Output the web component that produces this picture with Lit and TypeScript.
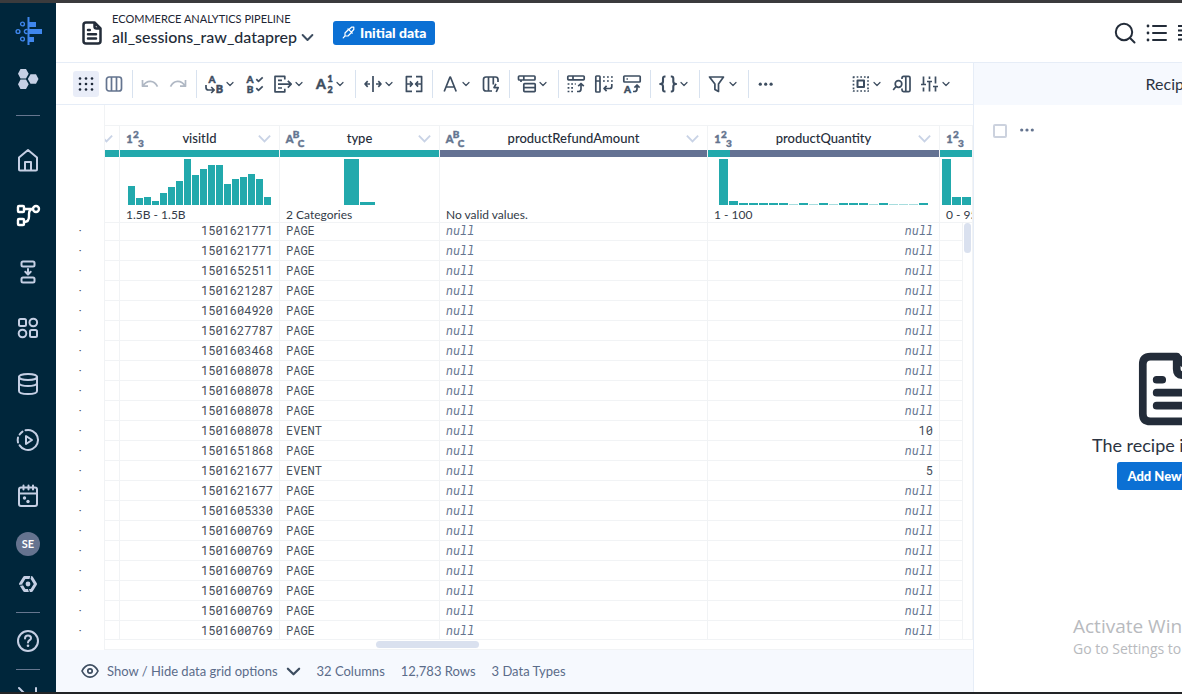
import { LitElement, html, svg, css } from "lit";
import { customElement } from "lit/decorators.js";

const TOOL: Record<string, unknown> = {
  grid: svg`<g fill="#1f2a3a" stroke="none">${[4.5, 10, 15.5].map((y) => [4, 10, 16].map((x) => svg`<circle cx=${x} cy=${y} r="1.3"/>`))}</g>`,
  columns: svg`<rect x="2.5" y="3" width="15" height="14" rx="2.5"/><path d="M7.5 3v14M12.5 3v14"/>`,
  undo: svg`<path d="M2.5 6v6.2h5.5M3 11.7C7 5.8 14 5.8 17.5 12.7"/>`,
  redo: svg`<path d="M17.5 6v6.2H12M17 11.7C13 5.8 6 5.8 2.5 12.7"/>`,
  replace: svg`<text x="8" y="8.5" font-size="10">A</text><text x="15.5" y="19" font-size="11">B</text><path d="M2 11v2.5q0 2.5 2.5 2.5H10M7.2 13l3 3-3 3"/>`,
  standard: svg`<text x="5" y="8.5" font-size="10">A</text><text x="5" y="18.5" font-size="10">B</text><path d="M11.3 5.2l2.2 2.2 4.2-4M11.3 14.2l2.2 2.2 4.2-4"/>`,
  exporting: svg`<path d="M11.8 5.5V2.4H2v15.4h9.800v-3M5 6.300h4M5 14h4M5 10.200h13M14.800 6.800l3.400 3.400-3.400 3.400"/>`,
  number: svg`<text x="7" y="15" font-size="14">A</text><text x="16" y="8" font-size="9">1</text><text x="16" y="19" font-size="9">2</text>`,
  split: svg`<path d="M10 2v16M7 10H2.2M4.7 7.2L2 10l2.7 2.8M13 10h4.8M15.3 7.2L18 10l-2.7 2.8"/>`,
  merge: svg`<path d="M8 2.6H2.4v14.8H8M12 2.6h5.6v14.8H12M2.5 10H8M5.9 7.4L8.4 10l-2.5 2.6M17.5 10H12M14.1 7.4L11.6 10l2.5 2.6"/>`,
  letter: svg`<path d="M4.2 17.5L10 3h.4l5.8 14.5M6.2 13h8"/>`,
  bolt: svg`<path d="M11 17H5q-2.5 0-2.5-2.5v-9Q2.5 3 5 3h9.5Q17 3 17 5.5V8M7.5 3v14M12.3 3v7.5M15 9.8l-2 3.8h4.2L15.2 18"/>`,
  tables: svg`<rect x="1.5" y="2" width="16.5" height="4" rx=".8"/><path d="M6.8 2v4M4 6v2"/><rect x="6.8" y="9.6" width="11.4" height="8" rx=".8"/><path d="M6.8 13.6h11.4"/>`,
  pivot: svg`<rect x="1.8" y="2" width="16.4" height="3.8" rx=".8"/><path d="M7 2v4M11 17.5h1.5q2.5 0 2.5-2.5v-5M12.2 12.2L15 9.5l2.8 2.7"/><path d="M1.600 10h1.800M5.200 10H7M8.800 10h1M1.600 13.800h1.800M5.200 13.800H7M1.600 17.500h1.800M5.200 17.500H7"/>`,
  unpivot: svg`<rect x="1.800" y="2" width="4.200" height="16" rx=".8"/><path d="M2 7h4M17.800 10v2.500q0 2-2 2H10M12.600 11.800L10 14.500l2.600 2.700"/><path d="M9 3h1.800M13 3h1.800M17 3h1.800M9 7h1.800M13 7h1.800M17 7h1.800"/>`,
  header: svg`<rect x="1.800" y="2" width="16.400" height="6" rx=".8"/><path d="M4.500 5h1.400M11 17.500h1.500q2.500 0 2.500-2.500v-3.200M12.400 13.600L15 11l2.600 2.600"/><text x="5.500" y="18.500" font-size="10">A</text>`,
  braces: svg`<path stroke-width="2.100" d="M7.500 2.500H6.800Q5 2.500 5 4.500v3Q5 10 2.200 10 5 10 5 12.500v3q0 2 1.800 2h.7M12.800 2.500h.7q1.800 0 1.800 2v3q0 2.500 2.800 2.500-2.800 0-2.800 2.500v3q0 2-1.800 2h-.7"/>`,
  filter: svg`<path d="M2.500 3h14l-5 7v7.500l-3.600-2V10z"/>`,
  more: svg`<g fill="#3d4d60" stroke="none"><circle cx="4.300" cy="10.200" r="1.600"/><circle cx="9.700" cy="10.200" r="1.600"/><circle cx="15.100" cy="10.200" r="1.600"/></g>`,
  select: svg`<rect x="6.500" y="6.500" width="6.500" height="6.500" stroke-width="2"/><path stroke-dasharray="1.700 1.950" d="M2 3h16M2 17h16M2.500 2.500v15M17 2.500v15"/>`,
  find: svg`<circle cx="6.500" cy="10" r="3.300"/><path d="M4 12.500L1.200 16M10 5V4q0-1.600 1.600-1.600h5q1.400 0 1.400 1.400v12.400q0 1.400-1.400 1.400h-5Q10 17.600 10 16v-1.500M13.800 2.600v14.800"/>`,
  sliders: svg`<path d="M3.500 2.500v7.500M1 10.500h5M3.500 13.500v4M9.500 2.500v2.500M7 7.500h5M9.500 8v9.500M15.500 2.500v7M13 12.500h5M15.500 13v4.500"/>`,
};

const chev = (w = 8) => html`<svg class="chev" width=${w} height=${w} viewBox="0 0 8 8"><path d="M1 2.5l3 3 3-3"/></svg>`;

const doc = (w: number, h: number) => html`<svg width=${w} height=${h} viewBox="0 0 20 24" fill="none" stroke="#232c39" stroke-width="2.5" stroke-linecap="round" stroke-linejoin="round"><path d="M12.5 1.500H4Q1.500 1.500 1.500 4v16q0 2.500 2.500 2.500h12q2.500 0 2.500-2.500V7.500zM12.500 1.500v4q0 2 2 2h4M6 9h1.800M6 13.200h8M6 17.400h8"/></svg>`;

const SIDE: Record<string, unknown> = {
  logo: svg`<g stroke="none" fill="#3f86ec"><rect x="13.500" y="0" width="2" height="28"/><rect x="15" y="5" width="7" height="5"/><rect x="15" y="12" width="13" height="5"/><rect x="15" y="20" width="5" height="5"/></g><g stroke="#3f86ec" stroke-width="1.400"><circle cx="8.500" cy="7" r="1.900"/><circle cx="4" cy="14.500" r="1.900"/><path d="M13 12.600a2 2 0 1 0 0 3.800"/><circle cx="8.500" cy="22" r="1.900"/></g>`,
  hexes: svg`<g stroke="none" fill="#c5cfe4"><path d="M6.500 4h5.500l2.700 4.700-2.700 4.700H6.500L4 8.700zM6.500 14.600h5.500l2.700 4.700L12 24H6.500L4 19.300zM16.500 9.300H22l2.500 4.700-2.500 4.700h-5.500L13.800 14z"/></g>`,
  home: svg`<path d="M5 23.500V11.500l9-7.500 9 7.500v12q0 1-1 1h-5v-8.500h-6v8.500H6q-1 0-1-1z M11 24.500h6"/>`,
  flow: svg`<g stroke-width="2.400"><rect x="4" y="4" width="6" height="6" rx="1"/><circle cx="22" cy="7" r="3"/><rect x="4" y="17" width="6" height="6" rx="1"/><path d="M10 7h9M10 20q5 0 5-5.500V12q0-5 4-5"/></g>`,
  deploy: svg`<rect x="7.500" y="3.500" width="13" height="5" rx="1.500"/><rect x="7.500" y="19.500" width="13" height="5" rx="1.500"/><path d="M14 11v5M11.300 13.800L14 16.500l2.700-2.700"/>`,
  apps: svg`<rect x="5" y="5" width="7" height="7" rx="1.500"/><circle cx="19.300" cy="8.500" r="3.800"/><circle cx="8.500" cy="19.500" r="3.800"/><rect x="16" y="16" width="7" height="7" rx="1.500"/>`,
  data: svg`<ellipse cx="14" cy="7" rx="9" ry="3"/><path d="M5 7v14q0 3 9 3t9-3V7M5 13.500q1.500 2.500 9 2.500t9-2.500"/>`,
  play: svg`<path d="M11.500 4.300A10 10 0 1 1 5.600 19.400M4 16.500a10 10 0 0 1 0-5M5.600 8.500A10 10 0 0 1 8.500 5.600M12 10v8l6-4z"/>`,
  calendar: svg`<rect x="5" y="5.500" width="18" height="18.500" rx="2"/><path d="M5 11.500h18M9.500 3.500v4M14.500 3.500v4M19 3.500v4"/><g stroke="none" fill="#c5cfe4"><circle cx="10.500" cy="16" r="1.700"/><circle cx="14" cy="19.500" r="1.700"/></g>`,
  settings: svg`<path stroke-width="3" d="M10.500 7.500h7l4 6.500-4 6.500h-7L6.500 14z"/><circle cx="14" cy="14" r="2.400" fill="#c5cfe4" stroke="none"/><path stroke="#00263b" stroke-width="1" d="M17 5l-1 4M4.500 15.500l4-.5M15.500 22.500l-1-3.500"/>`,
  help: svg`<circle cx="14" cy="14" r="10"/><path d="M11 11.500q0-3 3-3t3 2.700c0 2-3 2-3 4.300"/><circle cx="14" cy="18.800" r="1.300" fill="#c5cfe4" stroke="none"/>`,
  expand: svg`<path d="M5 4l5 5M9 4M22 4v5h-4.500M5 24l5-5M22 24v-5"/>`,
};

const side = (name: string, label: string, cls = "") => html`<a class="item ${cls}" href="#" aria-label=${label}><svg width="28" height="28" viewBox="0 0 28 28">${SIDE[name]}</svg></a>`;

const tool = (name: string, label: string, menu = false, cls = "") => html`<button class="tool ${menu ? "menu" : ""} ${cls}" aria-label=${label}><svg width="20" height="20" viewBox="0 0 20 20">${TOOL[name]}</svg>${menu ? chev() : ""}</button>`;
const sep = html`<span class="sep"></span>`;

const typeIcon = (kind: string) => {
  const t = kind === "num" ? ["1", "2", "3"] : ["A", "B", "C"];
  return html`<svg class="kind" width="20" height="20" viewBox="0 0 20 20" aria-hidden="true"><text x="4.5" y="15" font-size="11">${t[0]}</text><text x="11" y="10" font-size="10">${t[1]}</text><text x="16" y="19" font-size="10">${t[2]}</text></svg>`;
};

interface Column { name: string; kind: string; bars: number[]; layout: string; summary: string; fill: number; span?: number }
const COLUMNS: Column[] = [
  { name: "visitId", kind: "num", bars: [19, 7, 8, 4, 12, 18, 24, 46, 30, 36, 40, 40, 21, 26, 28, 31, 26, 8], layout: "dense", summary: "1.5B - 1.5B", fill: 100 },
  { name: "type", kind: "text", bars: [46, 3], layout: "wide", summary: "2 Categories", fill: 100 },
  { name: "productRefundAmount", kind: "text", bars: [], layout: "dense", summary: "No valid values.", fill: 0 },
  { name: "productQuantity", kind: "num", bars: [46, 4, 2, 2, 2, 2, 2, 1, 2, 1, 2, 1, 2, 2, 2, 1, 2, 1, 1, 1, 2], layout: "medium", summary: "1 - 100", fill: 9.5 },
  { name: "", kind: "num", bars: [46, 8, 8], layout: "edge", summary: "0 - 955", fill: 100, span: 2 },
];

const ROWS: [string, string, string][] = [
  ["1501621771", "PAGE", ""], ["1501621771", "PAGE", ""], ["1501652511", "PAGE", ""], ["1501621287", "PAGE", ""],
  ["1501604920", "PAGE", ""], ["1501627787", "PAGE", ""], ["1501603468", "PAGE", ""], ["1501608078", "PAGE", ""],
  ["1501608078", "PAGE", ""], ["1501608078", "PAGE", ""], ["1501608078", "EVENT", "10"], ["1501651868", "PAGE", ""],
  ["1501621677", "EVENT", "5"], ["1501621677", "PAGE", ""], ["1501605330", "PAGE", ""], ["1501600769", "PAGE", ""],
  ["1501600769", "PAGE", ""], ["1501600769", "PAGE", ""], ["1501600769", "PAGE", ""], ["1501600769", "PAGE", ""],
  ["1501600769", "PAGE", ""],
];

@customElement("side-nav")
export class SideNav extends LitElement {
  static styles = css`
    :host { display: block; flex: none; width: 56px; background: #00263b; overflow: hidden; }
    nav { display: flex; flex-direction: column; align-items: center; }
    .item { flex: none; width: 56px; height: 56px; display: flex; align-items: center; justify-content: center; text-decoration: none; }
    .short { height: 40px; }
    svg { fill: none; stroke: #c5cfe4; stroke-width: 2; stroke-linejoin: round; stroke-linecap: round; }
    .active svg { stroke: #fff; }
    hr { width: 24px; height: 1px; border: 0; margin: 8px 0; background: #66768f; }
    hr.far { margin: 16px 0; }
    .avatar { width: 24px; height: 24px; border-radius: 50%; background: #65738f; color: #fff; font: bold 11px/24px Lato, sans-serif; text-align: center; }
  `;
  render() {
    return html`<nav>
      ${side("logo", "Dataprep")}${side("hexes", "Products", "short")}
      <hr class="far" />
      ${side("home", "Home")}${side("flow", "Flows", "active")}${side("deploy", "Plans")}${side("apps", "Library")}
      ${side("data", "Data")}${side("play", "Jobs")}${side("calendar", "Schedules")}
      <a class="item short" href="#" aria-label="Account"><span class="avatar">SE</span></a>
      ${side("settings", "Settings", "short")}<hr />${side("help", "Help", "short")}<hr />${side("expand", "Expand menu", "short")}
    </nav>`;
  }
}

@customElement("data-grid")
export class DataGrid extends LitElement {
  static styles = css`
    :host { display: flex; flex-direction: column; flex: 1; min-height: 0; overflow: hidden; }
    table { table-layout: fixed; width: 100%; border-collapse: separate; border-spacing: 0; }
    .c-gutter { width: 49px; } .c-prev { width: 15px; } .c-mid { width: 160px; } .c-qty { width: 232px; } .c-next { width: 23px; } .c-scroll { width: 10px; }
    th, td { padding: 0; border-right: 1px solid #f1f3f5; border-bottom: 1px solid #f1f3f5; overflow: hidden; white-space: nowrap; vertical-align: top; }
    th { font-weight: normal; text-align: left; }
    .lead td { height: 20px; border-right: 0; }
    .gutter, .lead .gutter { border-bottom: 0; border-right: 1px solid #f1f3f5; }
    tbody td { height: 19px; line-height: 19px; font-family: "Roboto Mono", "Liberation Mono", monospace; font-size: 12px; color: #454d59; }
    tbody tr:first-child td { height: 17px; line-height: 14px; }
    tbody tr:last-child td { height: 18px; line-height: 18px; }
    td.gutter { text-align: center; }
    td.num { text-align: right; padding-right: 6px; }
    td.str { padding-left: 6px; }
    tbody td.null { font-style: italic; color: #64748f; }
    .thumb { width: 7px; height: 30px; margin: 0 auto; border-radius: 4px; background: #dae1ef; }
    .head { display: grid; grid-template-columns: 20px 1fr 20px; align-items: center; height: 24px; padding: 0 5px; }
    .head.cut { padding: 0; grid-template-columns: 20px; justify-content: end; }
    .head.last { grid-template-columns: 20px; }
    .name { text-align: center; font-size: 13px; line-height: 20px; font-weight: 500; color: #262d3a; }
    .more { display: flex; justify-content: center; padding: 0; border: 0; background: none; }
    .chev { fill: none; stroke: #c9d3e6; stroke-width: 1; }
    .kind { overflow: visible; fill: #64748f; stroke: #64748f; stroke-width: 0.4; font-family: Lato, sans-serif; font-weight: 900; text-anchor: middle; }
    .quality { height: 7px; background: #647293; }
    .valid { height: 7px; background: #22a9ac; }
    .bars { display: flex; align-items: flex-end; height: 46px; margin-top: 2px; gap: 1px; }
    .bar { flex: none; background: #22a9ac; }
    .faint { opacity: 0.4; }
    .dense { padding-left: 8px; } .dense .bar { width: 7px; }
    .wide { justify-content: center; } .wide .bar { width: 15px; }
    .medium { padding-left: 11px; } .medium .bar { width: 9px; }
    .edge { padding-left: 2px; } .edge .bar { width: 9px; }
    .summary { height: 15px; padding: 2px 0 0 6px; font-size: 12px; line-height: 15px; color: #333b48; }
    .track { flex: none; height: 8px; margin-left: 48px; border-left: 1px solid #f1f3f5; border-bottom: 1px solid #f1f3f5; padding: 1px 0 0 271px; }
    .slide { width: 103px; height: 7px; border-radius: 4px; background: #dae1ef; }
  `;
  private cell(c: Column) {
    return html`<th colspan=${c.span ?? 1} scope="col">
      <div class="head ${c.name ? "" : "last"}">
        ${typeIcon(c.kind)}${c.name ? html`<span class="name">${c.name}</span><button class="more" aria-label="Column menu">${chev(15)}</button>` : ""}
      </div>
      <div class="quality"><div class="valid" style="width:${c.fill}%"></div></div>
      <div class="bars ${c.layout}">${c.bars.map((h) => html`<div class="bar ${h === 1 ? "faint" : ""}" style="height:${h}px"></div>`)}</div>
      <div class="summary">${c.summary}</div>
    </th>`;
  }
  render() {
    return html`<table>
        <colgroup><col class="c-gutter" /><col class="c-prev" /><col class="c-mid" /><col class="c-mid" /><col /><col class="c-qty" /><col class="c-next" /><col class="c-scroll" /></colgroup>
        <thead>
          <tr class="lead"><td class="gutter"></td><td colspan="7"></td></tr>
          <tr><td class="gutter"></td>
            <th><div class="head cut">${chev(15)}</div><div class="quality"><div class="valid"></div></div></th>
            ${COLUMNS.map((c) => this.cell(c))}
          </tr>
        </thead>
        <tbody>
          ${ROWS.map(([id, type, qty], i) => html`<tr>
            <td class="gutter">·</td><td></td><td class="num">${id}</td><td class="str">${type}</td>
            <td class="str null">null</td><td class="num ${qty ? "" : "null"}">${qty || "null"}</td><td></td>
            ${i === 0 ? html`<td class="scroll" rowspan=${ROWS.length}><div class="thumb"></div></td>` : ""}
          </tr>`)}
        </tbody>
      </table>
      <div class="track"><div class="slide"></div></div>`;
  }
}

@customElement("recipe-panel")
export class RecipePanel extends LitElement {
  static styles = css`
    :host { display: block; flex: none; width: 390px; border-left: 1px solid #e6edf7; background: #fff; }
    h2 { margin: 0; height: 42px; background: #f6f9fe; text-align: center; font-size: 16px; line-height: 42px; font-weight: normal; color: #2c3442; }
    .bar { display: flex; align-items: center; gap: 13px; padding: 19px 19px 0; }
    input { appearance: none; width: 14px; height: 14px; margin: 0; border: 2px solid #ccd2de; border-radius: 2px; background: #fff; }
    .more { padding: 0; border: 0; background: none; display: flex; }
    .empty { display: flex; flex-direction: column; align-items: center; padding-top: 214px; }
    p { margin: 7px 0 5px; font-size: 18px; line-height: 24px; color: #2c3442; }
    .add { height: 28px; padding: 0 10px; border: 0; border-radius: 3px; background: #0b70d4; color: #fff; font: 900 13px/28px Lato, sans-serif; }
  `;
  render() {
    return html`<h2>Recipe</h2>
      <div class="bar"><input type="checkbox" aria-label="Select all steps" />
        <button class="more" aria-label="More"><svg width="14" height="14" viewBox="0 0 14 14" fill="#64748f"><circle cx="1.7" cy="6" r="1.6"/><circle cx="7" cy="6" r="1.6"/><circle cx="12.3" cy="6" r="1.6"/></svg></button></div>
      <div class="empty">${doc(62, 74)}<p>The recipe is empty</p><button class="add">Add New Step</button></div>`;
  }
}

@customElement("app-root")
export class AppRoot extends LitElement {
  static styles = css`
    :host { display: flex; box-sizing: border-box; width: 100%; height: 100vh; overflow: hidden; position: relative; border-top: 3px solid #3b3b3d; border-bottom: 2px solid #222426; background: #fff; font-family: Lato, sans-serif; }
    .page { flex: 1 0 1308px; width: 1308px; display: flex; flex-direction: column; }
    header { flex: none; height: 59px; display: flex; align-items: center; padding-left: 26px; border-bottom: 1px solid #e6edf7; }
    .titles { margin-left: 10px; padding-bottom: 5px; }
    .flow { display: block; font-size: 11px; line-height: 14px; color: #1d2533; text-decoration: none; }
    .title { display: flex; align-items: center; gap: 4px; padding: 0; border: 0; background: none; font: 500 16px/22px Lato, sans-serif; color: #232c39; }
    .chev { flex: none; fill: none; stroke: #3d4d60; stroke-width: 1.2; stroke-linecap: round; stroke-linejoin: round; }
    .sample { display: flex; align-items: center; gap: 5px; height: 24px; margin-left: 19px; padding: 0 9px; border: 0; border-radius: 3px; background: #0b70d4; color: #fff; font: 900 14px/24px Lato, sans-serif; }
    .views { display: flex; gap: 10px; width: 250px; margin-left: auto; }
    .views button { display: flex; padding: 0; border: 0; background: none; }
    .body { flex: 1; min-height: 0; display: flex; }
    main { flex: 1; min-width: 0; display: flex; flex-direction: column; }
    .toolbar { flex: none; display: flex; align-items: center; gap: 2px; height: 41px; padding: 0 17px; border-bottom: 1px solid #e6edf7; }
    .tool { flex: none; display: flex; align-items: center; justify-content: center; gap: 2px; width: 26px; height: 26px; padding: 0; border: 0; border-radius: 3px; background: none; }
    .tool > svg:first-child { flex: none; fill: none; stroke: #3d4d60; stroke-width: 1.7; stroke-linejoin: round; }
    .tool text { fill: #3d4d60; stroke: #3d4d60; stroke-width: 0.5; font-family: Lato, sans-serif; font-weight: 900; text-anchor: middle; }
    .tool.menu { width: 39px; box-sizing: border-box; justify-content: flex-start; padding-left: 3px; }
    .on { background: #e9edf8; }
    .tool.slate > svg:first-child { stroke: #64748f; }
    .tool.off > svg:first-child { stroke: #b0b8c4; }
    .sep { flex: none; width: 1px; height: 28px; margin: 0 2px 0 3px; background: #d8e2ef; }
    .space { flex: 1; }
    footer { flex: none; display: flex; align-items: center; gap: 16px; height: 42px; padding-left: 25px; background: #f6f9fe; font-size: 13px; line-height: 20px; color: #5b6c8a; }
    .options { display: flex; align-items: center; gap: 8px; padding: 0; border: 0; background: none; font: 13px/20px Lato, sans-serif; color: #5b6c8a; }
    .notice { position: absolute; left: 1073px; bottom: 33px; white-space: nowrap; font-family: "Open Sans", sans-serif; color: #b8babe; pointer-events: none; }
    .notice strong { display: block; font-weight: normal; font-size: 19px; line-height: 24px; }
    .notice span { display: block; font-size: 14px; line-height: 21px; }
  `;
  render() {
    const dark = "#232c39";
    return html`<side-nav></side-nav>
      <div class="page">
        <header>
          ${doc(20, 24)}
          <div class="titles"><a class="flow" href="#">ECOMMERCE ANALYTICS PIPELINE</a>
            <button class="title">all_sessions_raw_dataprep ${chev(13)}</button></div>
          <button class="sample"><svg width="13" height="13" viewBox="0 0 13 13" fill="none" stroke="#fff" stroke-width="1.2" stroke-linejoin="round" stroke-linecap="round"><path d="M1.200 11.800L3 10M6 2.800l4.300 4.300M6.500 3.500L3 7v3h3l3.500-3.500M7 3.500L9.500 1.200h2.300v2.300L9.500 6"/></svg>Initial data</button>
          <div class="views">
            <button aria-label="Search"><svg width="22" height="22" viewBox="0 0 22 22" fill="none" stroke=${dark} stroke-width="2" stroke-linecap="round"><circle cx="10" cy="10" r="8.2"/><path d="M16 16l4.500 4.500"/></svg></button>
            <button aria-label="List"><svg width="22" height="22" viewBox="0 0 22 22" stroke=${dark} stroke-width="2" stroke-linecap="round"><path d="M2 4h0M2 11h0M2 18h0" stroke-width="2.8"/><path d="M7 4h13M7 11h13M7 18h13"/></svg></button>
            <button aria-label="Details"><svg width="20" height="22" viewBox="0 0 20 22" stroke=${dark} stroke-width="1.8"><path d="M0 4h20M0 8.500h20M0 13h20M0 17.500h20"/></svg></button>
          </div>
        </header>
        <div class="body">
          <main>
            <div class="toolbar">
              ${tool("grid", "Grid view", false, "on")}${tool("columns", "Columns view", false, "slate")}${sep}
              ${tool("undo", "Undo", false, "off")}${tool("redo", "Redo", false, "off")}${sep}
              ${tool("replace", "Replace", true)}${tool("standard", "Standardize")}${tool("exporting", "Extract", true)}${tool("number", "Count", true)}${sep}
              ${tool("split", "Split", true)}${tool("merge", "Merge")}${sep}
              ${tool("letter", "Format", true)}${tool("bolt", "Schema")}${sep}
              ${tool("tables", "Group", true)}${sep}
              ${tool("pivot", "Pivot")}${tool("unpivot", "Unpivot")}${tool("header", "Rename")}${sep}
              ${tool("braces", "Functions", true)}${sep}${tool("filter", "Filter", true)}${sep}${tool("more", "More")}
              <span class="space"></span>
              ${tool("select", "Selection", true)}${tool("find", "Find column")}${tool("sliders", "View options", true)}
            </div>
            <data-grid></data-grid>
            <footer>
              <button class="options"><svg width="18" height="16" viewBox="0 0 18 16" fill="none" stroke="#3d4d60" stroke-width="1.7"><path d="M1 8Q4 1.800 9 1.800T17 8Q14 14.200 9 14.200T1 8z"/><circle cx="9" cy="8" r="2.2"/></svg>Show / Hide data grid options ${chev(15)}</button>
              <span>32 Columns</span><span>12,783 Rows</span><span>3 Data Types</span>
            </footer>
          </main>
          <recipe-panel></recipe-panel>
        </div>
      </div>
      <div class="notice"><strong>Activate Windows</strong><span>Go to Settings to activate Windows.</span></div>`;
  }
}
